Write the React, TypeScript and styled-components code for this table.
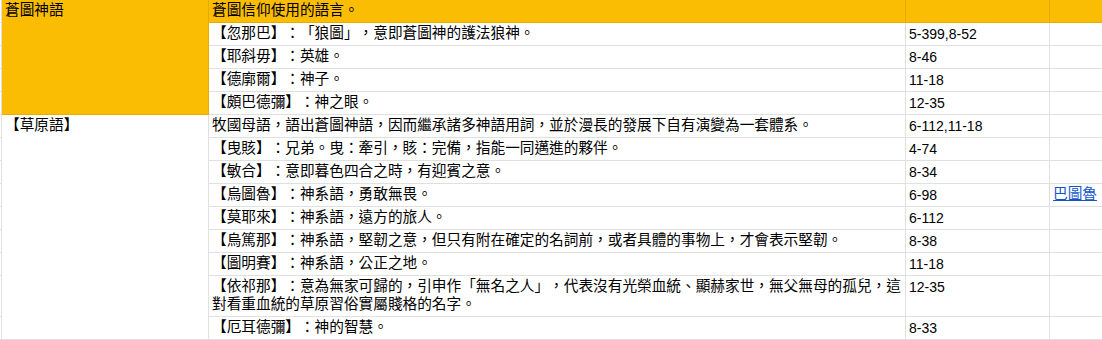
import React from "react";
import styled, { createGlobalStyle } from "styled-components";

const YELLOW = "#fbbc04";
const YELLOW_LINE = "#e6ab04";
const GRID_LINE = "#e0e0e0";

const GlobalStyle = createGlobalStyle`
  html, body {
    margin: 0;
    padding: 0;
    background: #fff;
    overflow: hidden;
  }
`;

const Sheet = styled.div`
  display: grid;
  grid-template-columns: 2px 207px 697px 144px 60px;
  grid-template-rows: repeat(12, 23px) 41px 23px;
  width: 1110px;
  font-family: "Noto Sans CJK TC", "Noto Sans CJK SC", sans-serif;
  font-size: 14.67px;
  line-height: 18px;
  color: #000;
  text-spacing-trim: space-all;
`;

const Cell = styled.div<{ $fill?: boolean; $rows?: number }>`
  box-sizing: border-box;
  grid-row: span ${(p) => p.$rows ?? 1};
  padding: 0 3px;
  background: ${(p) => (p.$fill ? YELLOW : "#fff")};
  border-right: 1px solid ${(p) => (p.$fill ? YELLOW_LINE : GRID_LINE)};
  border-bottom: 1px solid ${(p) => (p.$fill ? YELLOW_LINE : GRID_LINE)};
`;

// column before A, only its edge shows at x=0
const Stub = styled(Cell)`
  padding: 0;
`;

const NumberCell = styled(Cell)`
  padding-top: 2px;
  font-family: "Liberation Sans", Arial, sans-serif;
  font-size: 14px;
`;

const Link = styled.a`
  color: #1155cc;
  text-decoration: underline;
`;

interface Entry {
  text: string;
  ref: string;
  link?: string;
}

const godTongue: Entry[] = [
  { text: "【忽那巴】：「狼圖」，意即蒼圖神的護法狼神。", ref: "5-399,8-52" },
  { text: "【耶斜毋】：英雄。", ref: "8-46" },
  { text: "【德廓爾】：神子。", ref: "11-18" },
  { text: "【頗巴德彌】：神之眼。", ref: "12-35" },
];

const steppeTongue: Entry[] = [
  {
    text: "牧國母語，語出蒼圖神語，因而繼承諸多神語用詞，並於漫長的發展下自有演變為一套體系。",
    ref: "6-112,11-18",
  },
  { text: "【曳賅】：兄弟。曳：牽引，賅：完備，指能一同邁進的夥伴。", ref: "4-74" },
  { text: "【敏合】：意即暮色四合之時，有迎賓之意。", ref: "8-34" },
  { text: "【烏圖魯】：神系語，勇敢無畏。", ref: "6-98", link: "巴圖魯" },
  { text: "【莫耶來】：神系語，遠方的旅人。", ref: "6-112" },
  {
    text: "【烏篤那】：神系語，堅韌之意，但只有附在確定的名詞前，或者具體的事物上，才會表示堅韌。",
    ref: "8-38",
  },
  { text: "【圖明賽】：神系語，公正之地。", ref: "11-18" },
  {
    text: "【依祁那】：意為無家可歸的，引申作「無名之人」，代表沒有光榮血統、顯赫家世，無父無母的孤兒，這對看重血統的草原習俗實屬賤格的名字。",
    ref: "12-35",
  },
  { text: "【厄耳德彌】：神的智慧。", ref: "8-33" },
];

const EntryRow = ({ entry }: { entry: Entry }) => (
  <>
    <Cell>{entry.text}</Cell>
    <NumberCell>{entry.ref}</NumberCell>
    <Cell>{entry.link && <Link href="#">{entry.link}</Link>}</Cell>
  </>
);

const App = () => {
  return (
    <>
      <GlobalStyle />
      <Sheet>
        <Stub />
        <Cell $fill $rows={godTongue.length + 1}>
          蒼圖神語
        </Cell>
        <Cell $fill>蒼圖信仰使用的語言。</Cell>
        <NumberCell $fill />
        <Cell $fill />
        {godTongue.map((entry) => (
          <React.Fragment key={entry.text}>
            <Stub />
            <EntryRow entry={entry} />
          </React.Fragment>
        ))}
        {steppeTongue.map((entry, i) => (
          <React.Fragment key={entry.text}>
            <Stub />
            {i === 0 && <Cell $rows={steppeTongue.length}>【草原語】</Cell>}
            <EntryRow entry={entry} />
          </React.Fragment>
        ))}
      </Sheet>
    </>
  );
};

export default App;
